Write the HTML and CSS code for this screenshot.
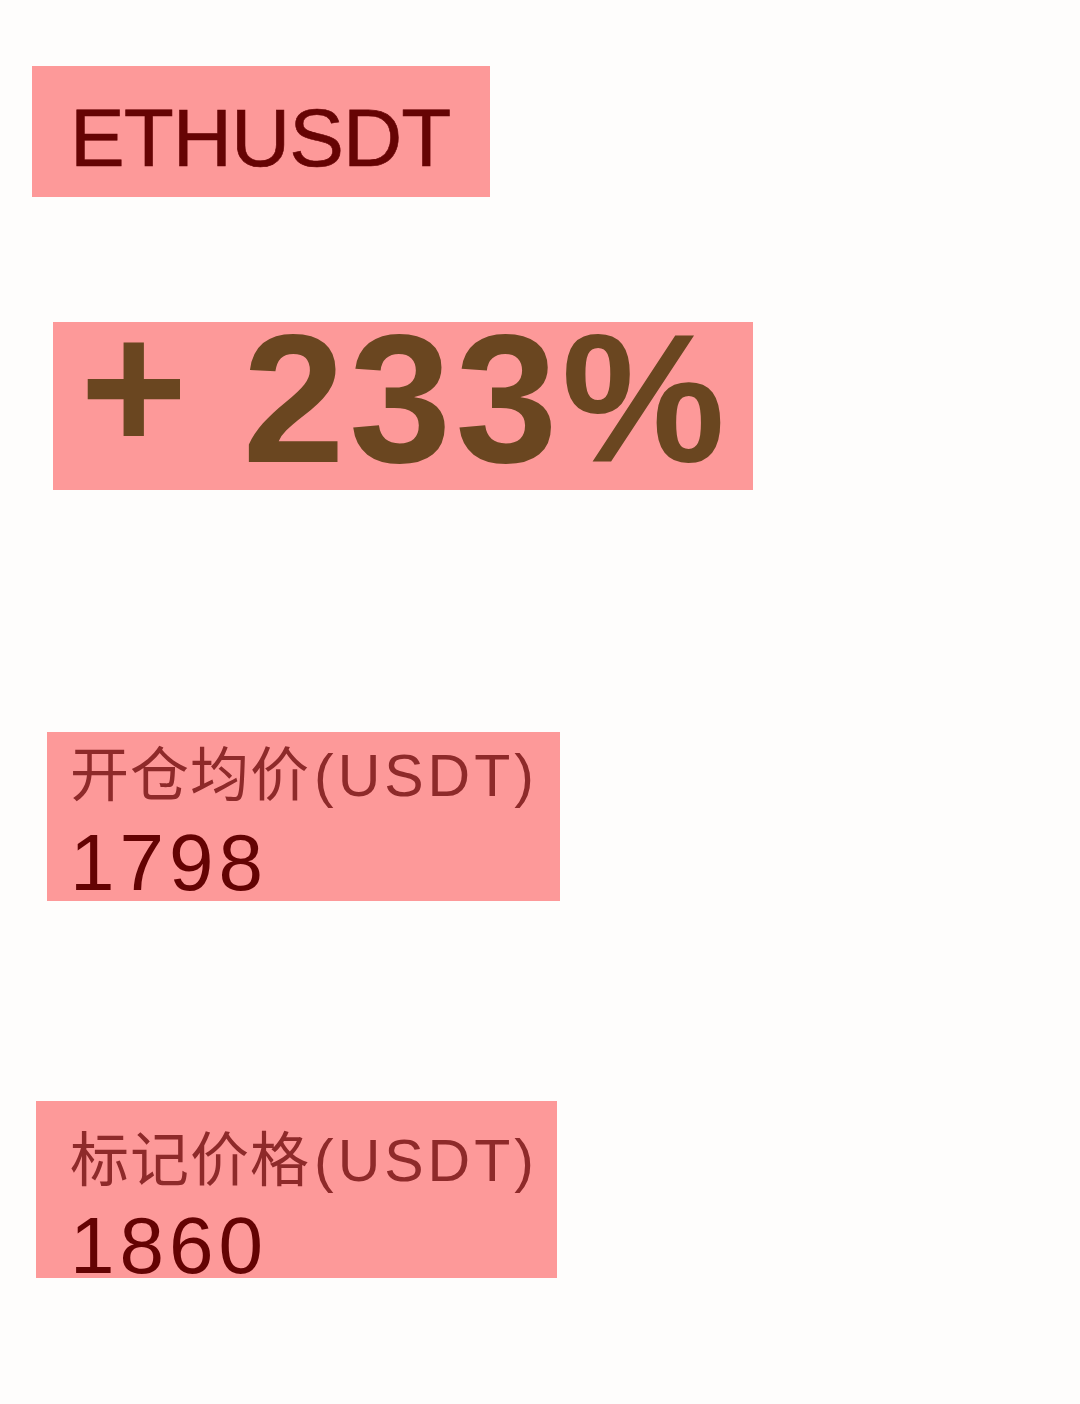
FILE: index.html
```html
<!DOCTYPE html>
<html lang="zh-CN">
<head>
<meta charset="utf-8">
<title>ETHUSDT</title>
<link rel="stylesheet" href="styles.css">
</head>
<body>
<main class="sheet">
  <div class="tag tag-pair">ETHUSDT</div>
  <div class="tag tag-gain"><span class="gain-sign">+</span> 233%</div>
  <div class="tag tag-stat stat-open">
    <span class="stat-label">开仓均价<span class="stat-unit">(USDT)</span></span>
    <span class="stat-value">1798</span>
  </div>
  <div class="tag tag-stat stat-mark">
    <span class="stat-label">标记价格<span class="stat-unit">(USDT)</span></span>
    <span class="stat-value">1860</span>
  </div>
</main>
</body>
</html>
```

FILE: styles.css
```css
html, body {
  margin: 0;
  padding: 0;
  background: #fefdfc;
}

body {
  width: 1080px;
  height: 1404px;
  overflow: hidden;
  font-family: "Liberation Sans", "Noto Sans CJK SC", sans-serif;
}

.sheet {
  display: flex;
  flex-direction: column;
  align-items: flex-start;
  padding-top: 66px;
}

.tag {
  box-sizing: border-box;
  background: #fd9999;
}

/* pair name */
.tag-pair {
  margin-left: 32px;
  width: 458px;
  height: 131px;
  padding: 31px 0 0 38px;
  font-size: 82px;
  line-height: 82px;
  letter-spacing: -1px;
  color: #660404;
  -webkit-text-stroke: 0.6px #660404;
}

/* return percentage */
.tag-gain {
  margin-top: 125px;
  margin-left: 53px;
  width: 700px;
  height: 168px;
  padding: 0 0 0 27px;
  font-size: 184px;
  line-height: 152px;
  font-weight: 700;
  letter-spacing: 4px;
  color: #6a4620;
  white-space: pre;
}

/* the sign sits a little higher than the digits */
.gain-sign {
  line-height: 0;
  vertical-align: 12px;
  letter-spacing: 0;
}

.tag-stat {
  display: flex;
  flex-direction: column;
  align-items: flex-start;
}

.stat-open {
  margin-top: 242px;
  margin-left: 47px;
  width: 513px;
  height: 169px;
  padding: 7px 0 0 23px;
}

.stat-mark {
  margin-top: 200px;
  margin-left: 36px;
  width: 521px;
  height: 177px;
  padding: 23px 0 0 34px;
}

.stat-label {
  font-size: 59px;
  line-height: 74px;
  letter-spacing: 1px;
  color: #8e2a2a;
}

.stat-unit {
  margin-left: 4px;
  letter-spacing: 4px;
}

.stat-value {
  margin-top: 10px;
  font-size: 80px;
  line-height: 80px;
  letter-spacing: 5px;
  color: #640303;
}

.stat-mark .stat-value {
  margin-top: 8px;
}
```
